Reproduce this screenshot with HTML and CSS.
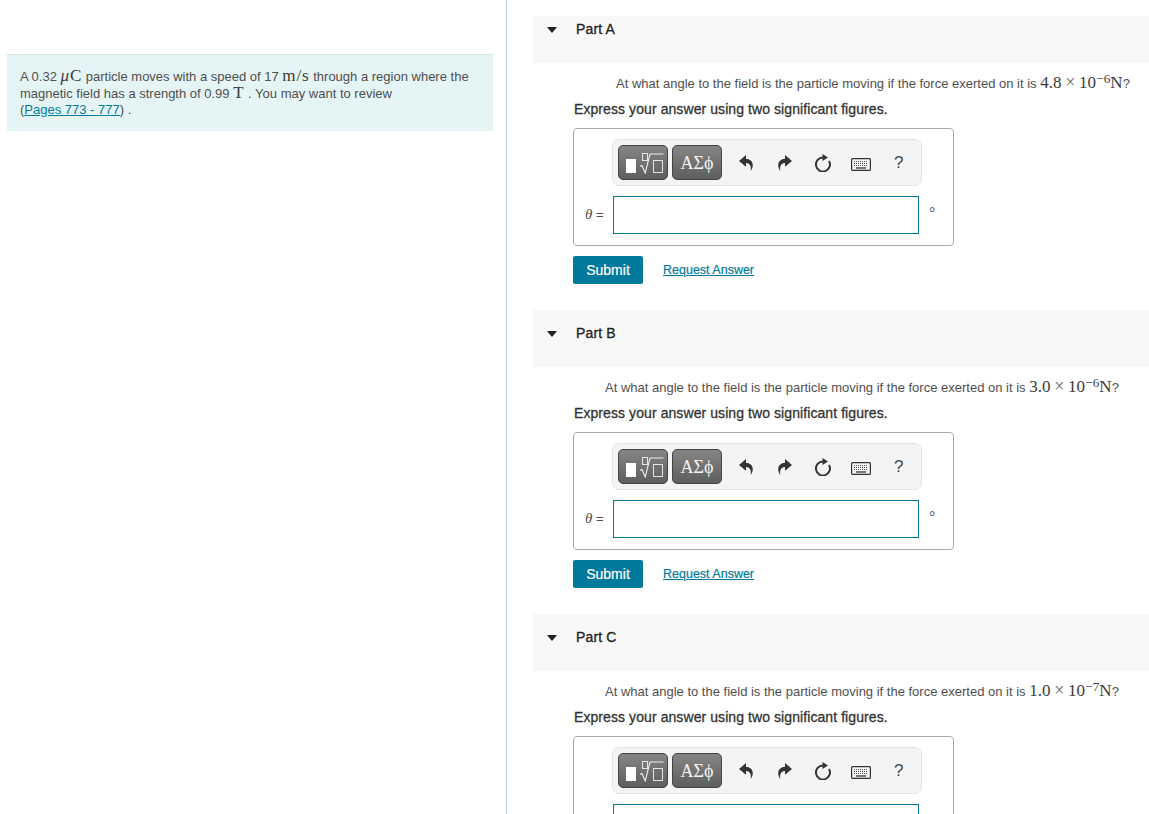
FILE: index.html
```html
<!DOCTYPE html>
<html lang="en">
<head>
<meta charset="utf-8">
<title>Part A</title>
<link rel="stylesheet" href="styles.css">
</head>
<body>
<svg class="defs" width="0" height="0" aria-hidden="true">
  <symbol id="i-root" viewBox="0 0 38 22">
    <rect x="0" y="7" width="10" height="14" fill="#fff"/>
    <rect x="16.500" y="1.500" width="5" height="7" fill="none" stroke="#e4e4e4"/>
    <path d="M14 14.500l2-1 3.200 7.500 4.800-19h13.500" fill="none" stroke="#f0f0f0" stroke-width="1.100"/>
    <rect x="27.500" y="8.500" width="9" height="12" fill="none" stroke="#e4e4e4"/>
  </symbol>
  <symbol id="i-undo" viewBox="0 0 14 16">
    <path d="M7 0L0 6l7 5.800V8c2.600 0 4 1.300 4.600 3.200.4 1.400.4 3 .1 4.800 1.500-1.800 2.300-4.200 2-6.700C13.300 5.800 10.800 3.900 7 3.900z" fill="#333"/>
  </symbol>
  <symbol id="i-reload" viewBox="0 0 16 18">
    <path d="M8 3.500a7 7 0 1 0 6 3.500" fill="none" stroke="#333" stroke-width="2"/>
    <path d="M7.500 0l5.500 3.500-5.500 3.500z" fill="#333"/>
  </symbol>
  <symbol id="i-keys" viewBox="0 0 20 13">
    <rect x="0.600" y="0.600" width="18.800" height="11.800" rx="1" fill="#f4f4f4" stroke="#333" stroke-width="1.200"/>
    <path d="M3 3.500h14M3 5.500h14M3 7.500h14" stroke="#555" stroke-width="1" stroke-dasharray="1 1"/>
    <path d="M5 10h10" stroke="#333" stroke-width="1.300"/>
  </symbol>
  <symbol id="i-caret" viewBox="0 0 10 6">
    <path d="M0 0h10L5 6z" fill="#222"/>
  </symbol>
</svg>
<div class="page">
  <aside class="left">
    <div class="note">A 0.32 <span class="math"><i>μ</i>C</span> particle moves with a speed of 17 <span class="math">m/s</span> through a region where the magnetic field has a strength of 0.99 <span class="math">T</span> . You may want to review<br>(<a href="#" class="pages">Pages 773 - 777</a>) .</div>
  </aside>
  <main class="right">

    <section class="part part-first">
      <header class="part-head"><svg class="caret"><use href="#i-caret"/></svg><h2 class="part-title">Part A</h2></header>
      <p class="question q-a">At what angle to the field is the particle moving if the force exerted on it is <span class="math">4.8<span class="times">×</span>10<sup>−6</sup>N</span>?</p>
      <p class="express">Express your answer using two significant figures.</p>
      <div class="answer">
        <div class="toolbar">
          <button class="tbtn tbtn-root"><svg class="root"><use href="#i-root"/></svg></button>
          <button class="tbtn tbtn-greek">ΑΣϕ</button>
          <svg class="ic ic-undo"><use href="#i-undo"/></svg>
          <svg class="ic ic-redo"><use href="#i-undo"/></svg>
          <svg class="ic ic-reload"><use href="#i-reload"/></svg>
          <svg class="ic ic-keys"><use href="#i-keys"/></svg>
          <span class="help">?</span>
        </div>
        <div class="entry"><span class="theta"><i>θ</i> =</span><span class="input"></span><span class="deg">°</span></div>
      </div>
      <div class="actions"><button class="submit">Submit</button><a href="#" class="request">Request Answer</a></div>
    </section>

    <section class="part">
      <header class="part-head"><svg class="caret"><use href="#i-caret"/></svg><h2 class="part-title">Part B</h2></header>
      <p class="question q-b">At what angle to the field is the particle moving if the force exerted on it is <span class="math">3.0<span class="times">×</span>10<sup>−6</sup>N</span>?</p>
      <p class="express">Express your answer using two significant figures.</p>
      <div class="answer">
        <div class="toolbar">
          <button class="tbtn tbtn-root"><svg class="root"><use href="#i-root"/></svg></button>
          <button class="tbtn tbtn-greek">ΑΣϕ</button>
          <svg class="ic ic-undo"><use href="#i-undo"/></svg>
          <svg class="ic ic-redo"><use href="#i-undo"/></svg>
          <svg class="ic ic-reload"><use href="#i-reload"/></svg>
          <svg class="ic ic-keys"><use href="#i-keys"/></svg>
          <span class="help">?</span>
        </div>
        <div class="entry"><span class="theta"><i>θ</i> =</span><span class="input"></span><span class="deg">°</span></div>
      </div>
      <div class="actions"><button class="submit">Submit</button><a href="#" class="request">Request Answer</a></div>
    </section>

    <section class="part">
      <header class="part-head"><svg class="caret"><use href="#i-caret"/></svg><h2 class="part-title">Part C</h2></header>
      <p class="question q-b">At what angle to the field is the particle moving if the force exerted on it is <span class="math">1.0<span class="times">×</span>10<sup>−7</sup>N</span>?</p>
      <p class="express">Express your answer using two significant figures.</p>
      <div class="answer">
        <div class="toolbar">
          <button class="tbtn tbtn-root"><svg class="root"><use href="#i-root"/></svg></button>
          <button class="tbtn tbtn-greek">ΑΣϕ</button>
          <svg class="ic ic-undo"><use href="#i-undo"/></svg>
          <svg class="ic ic-redo"><use href="#i-undo"/></svg>
          <svg class="ic ic-reload"><use href="#i-reload"/></svg>
          <svg class="ic ic-keys"><use href="#i-keys"/></svg>
          <span class="help">?</span>
        </div>
        <div class="entry"><span class="theta"><i>θ</i> =</span><span class="input"></span><span class="deg">°</span></div>
      </div>
    </section>
  </main>
</div>
</body>
</html>
```
FILE: styles.css
```css
html, body { margin: 0; padding: 0; height: 814px; overflow: hidden; background: #fff; }
body { font-family: "Liberation Sans", Arial, sans-serif; font-size: 13px; color: #4f4f4f; }
.defs { display: block; height: 0; }
.page { display: flex; height: 814px; overflow: hidden; }
.left { width: 506px; flex: none; border-right: 1px solid #b9cfe3; padding-top: 54px; }
.note { margin-left: 7px; width: 453px; padding: 14px 20px 12px 13px; background: #e5f5f6; border-top: 1px solid #d8e4e6; line-height: 16.500px; height: 50px; font-size: 13px; }
.math { font-family: "Liberation Serif", "Times New Roman", serif; font-size: 17px; letter-spacing: 0.100px; color: #3a3a3a; line-height: 0; }
.note .math { letter-spacing: 0.900px; }
.pages, .request { color: #007a9c; text-decoration: underline; }
.right { flex: 1; min-width: 0; padding: 16px 0 0 26px; }
.part { padding-bottom: 26px; }
.part-head { display: flex; align-items: flex-start; height: 57px; background: #f8f8f8; padding-top: 15px; box-sizing: border-box; }
.part-first .part-head { height: 47px; padding-top: 5px; }
.caret { width: 10px; height: 6px; margin: 6px 0 0 14px; flex: none; }
.part-title { margin: 0 0 0 19px; font-size: 14px; font-weight: 400; line-height: 16px; letter-spacing: 0.150px; color: #222; -webkit-text-stroke: 0.300px #222; }
.question { margin: 11px 0 0; line-height: 19px; height: 19px; white-space: nowrap; }
.q-a { padding-left: 83px; }
.q-b { padding-left: 72px; }
.times { padding: 0 3.500px; font-size: 18px; color: #666; }
.question sup { font-size: 13px; line-height: 0; vertical-align: 5px; }
.express { margin: 8px 0 0 41px; line-height: 16px; font-size: 14px; letter-spacing: 0.080px; color: #333; -webkit-text-stroke: 0.300px #333; }
.answer { margin: 11px 0 0 40px; width: 379px; height: 116px; border: 1px solid #aaa; border-radius: 4px; }
.toolbar { display: flex; align-items: center; box-sizing: border-box; width: 310px; height: 47px; margin: 10px 0 0 38px; padding-left: 5px; background: #f4f4f4; border: 1px solid #e4e4e4; border-radius: 7px; }
.tbtn { box-sizing: border-box; height: 35px; padding: 0; border: 1px solid #444; border-radius: 5px; background: linear-gradient(#858585, #5e5e5e); color: #f2f2f2; display: flex; align-items: center; justify-content: center; flex: none; }
.tbtn-root { width: 50px; }
.tbtn-greek { width: 50px; margin-left: 4px; font-family: "Liberation Serif", serif; font-size: 18px; padding-top: 1px; }
.root { width: 38px; height: 22px; margin-left: 4px; margin-top: 1px; }
.ic { flex: none; }
.ic-undo { width: 14px; height: 16px; margin: 1px 0 0 17px; }
.ic-redo { width: 14px; height: 16px; margin: 1px 0 0 25px; transform: scaleX(-1); }
.ic-reload { width: 16px; height: 18px; margin: 1px 0 0 23px; }
.ic-keys { width: 20px; height: 13px; margin-left: 20px; margin-top: 4px; }
.help { margin: 1px 0 0 23px; font-size: 17px; color: #444; }
.entry { display: flex; align-items: center; margin-top: 10px; height: 38px; }
.theta { width: 39px; padding-left: 11px; box-sizing: border-box; font-size: 13px; margin-top: -1px; white-space: nowrap; }
.theta i { font-family: "Liberation Serif", serif; font-size: 15px; }
.input { box-sizing: border-box; width: 306px; height: 38px; border: 1px solid #007a9c; background: #fff; }
.deg { margin-left: 10px; font-size: 16px; margin-top: -4px; color: #555; font-family: "Liberation Serif", serif; }
.actions { display: flex; align-items: center; margin: 10px 0 0 40px; height: 28px; }
.submit { box-sizing: border-box; width: 70px; height: 28px; border: 0; border-radius: 2px; background: #007a9c; color: #fff; font-family: "Liberation Sans", Arial, sans-serif; font-size: 14px; padding: 0; -webkit-text-stroke: 0.200px #fff; }
.request { margin: -1px 0 0 20px; font-size: 12.500px; -webkit-text-stroke: 0.200px #007a9c; }
```
